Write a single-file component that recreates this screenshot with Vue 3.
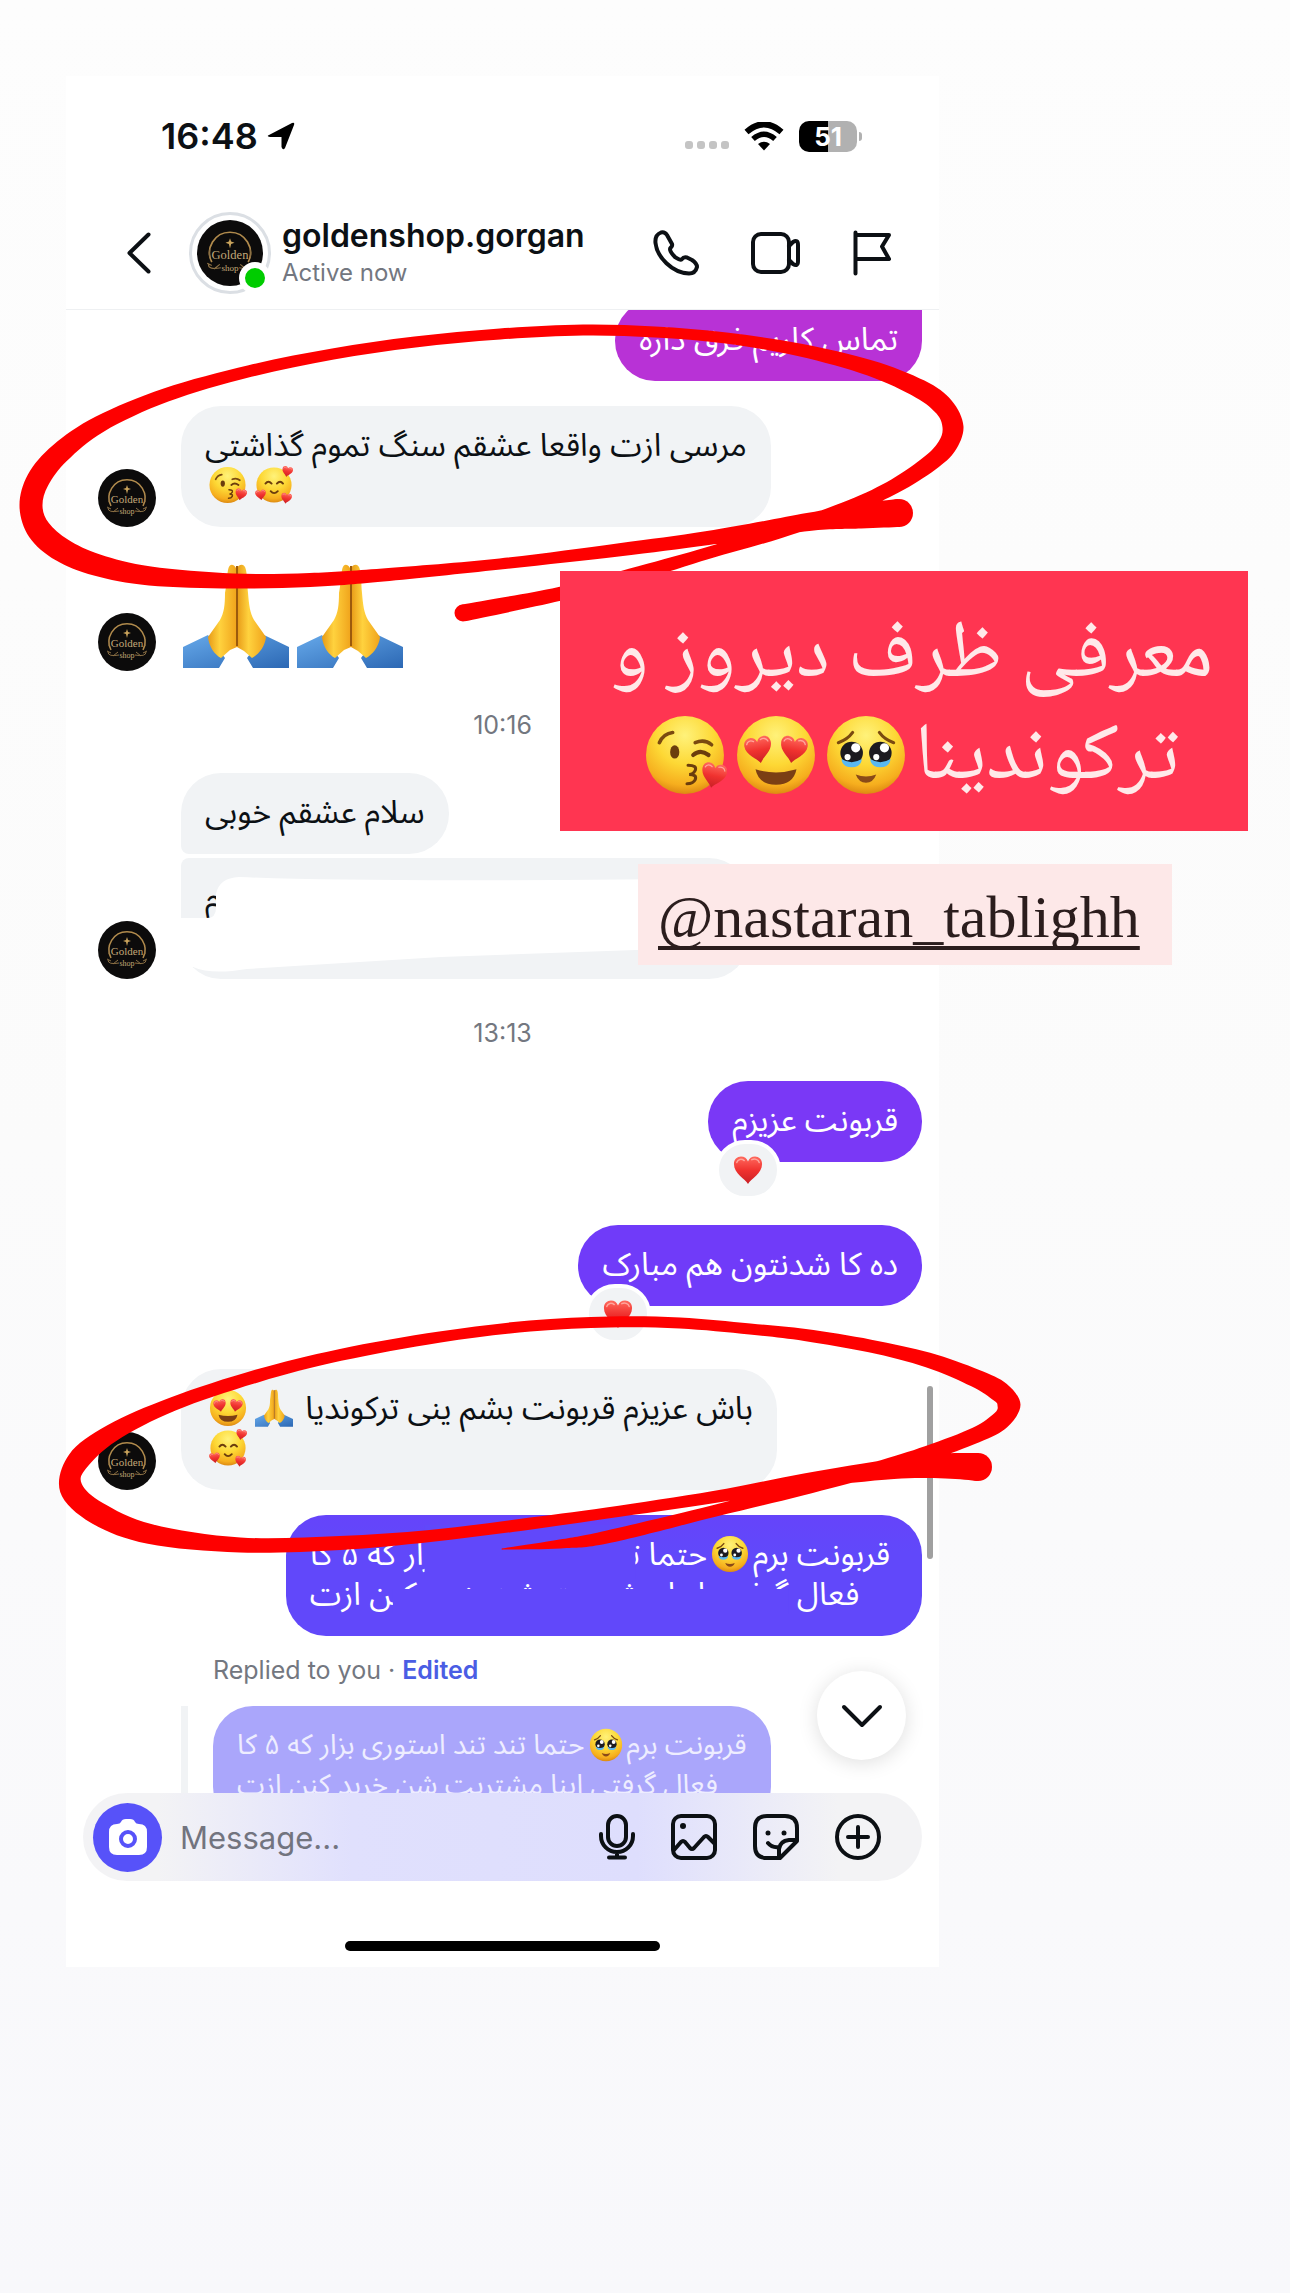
<script setup>
import { ref } from 'vue'

const draft = ref('')

const longReply = [
  ['قربونت برم', { icon: 'tears' }, 'حتما تند تند استوری بزار که ۵ کا'],
  ['فعال گرفتی اینا مشتریت شن خرید کنن ازت']
]

const messages = [
  { id: 1, kind: 'sent', tone: 'magenta', lines: [['تماس کاریم فرق داره']] },
  { id: 2, kind: 'received', avatar: true, lines: [['مرسی ازت واقعا عشقم سنگ تموم گذاشتی'], [{ icon: 'adore' }, { icon: 'kiss' }]] },
  { id: 3, kind: 'emoji', avatar: true },
  { id: 4, kind: 'time', text: '10:16' },
  { id: 5, kind: 'received', joined: 'first', lines: [['سلام عشقم خوبی']] },
  { id: 6, kind: 'received', joined: 'last', avatar: true, hidden: true, lines: [['م'], []] },
  { id: 7, kind: 'time', text: '13:13' },
  { id: 8, kind: 'sent', tone: 'violet', liked: true, lines: [['قربونت عزیزم']] },
  { id: 9, kind: 'sent', tone: 'purple', liked: true, lines: [['ده کا شدنتون هم مبارک']] },
  { id: 10, kind: 'received', avatar: true, lines: [['باش عزیزم قربونت بشم ینی ترکوندیا ', { icon: 'pray' }, { icon: 'love' }], [{ icon: 'adore' }]] },
  { id: 11, kind: 'sent', tone: 'indigo', scribbled: true, lines: longReply }
]

// marker strokes as [x, y, thickness]
const firstLoop = [
  [899, 513, 28], [860, 516, 25], [808, 522, 18], [708, 538, 14], [618, 550, 13], [500, 564, 11],
  [383, 575, 13], [310, 580, 14], [233, 581, 15], [150, 576, 19], [97, 565, 22], [62, 550, 24],
  [39, 530, 24], [31, 506, 23], [38, 480, 23], [60, 453, 21], [100, 424, 17], [166, 395, 14],
  [250, 371, 12], [333, 354, 11], [415, 342, 11], [500, 334, 11], [583, 330, 11], [655, 332, 11],
  [726, 338, 11], [800, 350, 13], [870, 368, 16], [920, 389, 19], [944, 407, 20], [953, 427, 21],
  [947, 446, 19], [930, 463, 17], [895, 486, 15], [850, 507, 14], [779, 532, 13], [708, 553, 12],
  [640, 573, 14], [559, 594, 14], [463, 613, 17]
]
const secondLoop = [
  [978, 1467, 28], [945, 1466, 25], [893, 1469, 20], [805, 1481, 15], [714, 1497, 12], [607, 1513, 11],
  [520, 1525, 12], [430, 1536, 12], [340, 1543, 14], [240, 1545, 15], [150, 1534, 20], [97, 1513, 23],
  [71, 1488, 23], [78, 1461, 22], [112, 1433, 18], [173, 1404, 14], [257, 1376, 13], [340, 1355, 12],
  [440, 1337, 11], [530, 1326, 11], [610, 1322, 11], [680, 1323, 11], [750, 1329, 11], [805, 1335, 12],
  [870, 1346, 13], [928, 1360, 15], [975, 1378, 18], [1000, 1392, 21], [1009, 1405, 23], [1001, 1420, 19],
  [976, 1435, 16], [928, 1453, 15], [875, 1469, 14], [800, 1489, 14], [714, 1511, 12], [607, 1537, 13],
  [560, 1544, 9], [502, 1549, 1]
]

function curve(points) {
  let d = ''
  for (let i = 0; i < points.length - 1; i++) {
    const a = points[i - 1] || points[i]
    const b = points[i]
    const c = points[i + 1]
    const e = points[i + 2] || c
    d += `C${b[0] + (c[0] - a[0]) / 6} ${b[1] + (c[1] - a[1]) / 6} `
    d += `${c[0] - (e[0] - b[0]) / 6} ${c[1] - (e[1] - b[1]) / 6} ${c[0]} ${c[1]}`
  }
  return d
}

function ribbon(points) {
  const left = []
  const right = []
  points.forEach(([x, y, w], i) => {
    const before = points[i - 1] || points[i]
    const after = points[i + 1] || points[i]
    const dx = after[0] - before[0]
    const dy = after[1] - before[1]
    const len = Math.hypot(dx, dy)
    const nx = (-dy / len) * (w / 2)
    const ny = (dx / len) * (w / 2)
    left.push([x + nx, y + ny])
    right.unshift([x - nx, y - ny])
  })
  return `M${left[0].join(' ')}${curve(left)}L${right[0].join(' ')}${curve(right)}Z`
}

const loops = [firstLoop, secondLoop].map((points) => ({
  d: ribbon(points),
  caps: [points[0], points[points.length - 1]]
}))
</script>

<template>
  <main class="story">
    <svg class="sprites" width="0" height="0" aria-hidden="true">
      <defs>
        <radialGradient id="face" cx="50%" cy="25%" r="75%">
          <stop offset="0" stop-color="#fff27a" />
          <stop offset=".5" stop-color="#fdd835" />
          <stop offset=".85" stop-color="#f6ae1e" />
          <stop offset="1" stop-color="#dd8a12" />
        </radialGradient>
        <linearGradient id="red" x1="0" y1="0" x2="0" y2="1">
          <stop offset="0" stop-color="#ff6a5e" />
          <stop offset=".5" stop-color="#f0322f" />
          <stop offset="1" stop-color="#c91f25" />
        </linearGradient>
        <linearGradient id="skin" x1="0" y1="0" x2="1" y2="0">
          <stop offset="0" stop-color="#e79a17" />
          <stop offset=".4" stop-color="#ffd23e" />
          <stop offset="1" stop-color="#f0a31b" />
        </linearGradient>
        <linearGradient id="sleeve" x1="0" y1="0" x2="1" y2="1">
          <stop offset="0" stop-color="#66a9ea" />
          <stop offset="1" stop-color="#2c68b4" />
        </linearGradient>
      </defs>
      <symbol id="heart" viewBox="0 0 32 32">
        <path d="M16 31C13 25 1 20 1 9.500C1 4.500 4.500 1.500 8.500 1.500C12 1.500 15 3.500 16 7C17 3.500 20 1.500 23.500 1.500C27.500 1.500 31 4.500 31 9.500C31 20 19 25 16 31Z" fill="url(#red)" />
        <path d="M4 8C5 4.500 9 3.500 12 6M20 5C23 3.500 27 4.500 28 8" fill="none" stroke="#ffa59c" stroke-width="1.500" stroke-linecap="round" />
      </symbol>
      <symbol id="kiss" viewBox="0 0 80 80">
        <circle cx="39" cy="40" r="38" fill="url(#face)" />
        <path d="M14 28Q18 19 27 18M49 28Q58 24 65 30" fill="none" stroke="#7a4a10" stroke-width="3.500" stroke-linecap="round" />
        <ellipse cx="29" cy="37" rx="4.500" ry="6.500" fill="#6b3d0d" />
        <path d="M47 40Q54 34 62 40" fill="none" stroke="#6b3d0d" stroke-width="4" stroke-linecap="round" />
        <path d="M42 50Q51 50 49 55Q47 59 43 59Q51 59 49 64Q47 68 41 68" fill="none" stroke="#6b3d0d" stroke-width="3" stroke-linecap="round" />
        <use href="#heart" x="54" y="47" width="26" height="26" transform="rotate(12 67 60)" />
      </symbol>
      <symbol id="love" viewBox="0 0 80 80">
        <circle cx="40" cy="40" r="38" fill="url(#face)" />
        <use href="#heart" x="9" y="21" width="28" height="28" transform="rotate(-10 23 35)" />
        <use href="#heart" x="43" y="21" width="28" height="28" transform="rotate(10 57 35)" />
        <path d="M20 54Q40 60 60 54Q57 69 40 69Q23 69 20 54Z" fill="#7b3f14" />
      </symbol>
      <symbol id="tears" viewBox="0 0 80 80">
        <circle cx="40" cy="40" r="38" fill="url(#face)" />
        <path d="M13 28Q22 25 27 18M53 18Q58 25 67 28" fill="none" stroke="#7a4a10" stroke-width="3" stroke-linecap="round" />
        <circle cx="26" cy="38" r="11" fill="#1c1a20" />
        <circle cx="54" cy="38" r="11" fill="#1c1a20" />
        <path d="M16 44Q26 50 36 44Q35 52 26 52Q17 52 16 44ZM44 44Q54 50 64 44Q63 52 54 52Q45 52 44 44Z" fill="#5ab8f0" />
        <g fill="#fff">
          <circle cx="30" cy="33" r="4.500" /><circle cx="58" cy="33" r="4.500" />
          <circle cx="22" cy="42" r="3" /><circle cx="50" cy="42" r="3" />
        </g>
        <path d="M30 59Q40 63 50 59Q47 67 40 67Q33 67 30 59Z" fill="#8a4a18" />
      </symbol>
      <symbol id="adore" viewBox="0 0 80 80">
        <circle cx="40" cy="40" r="37" fill="url(#face)" />
        <path d="M22 37Q28 29 35 37M46 37Q53 29 59 37" fill="none" stroke="#6b3d0d" stroke-width="4" stroke-linecap="round" />
        <path d="M33 53Q40 61 48 53" fill="none" stroke="#6b3d0d" stroke-width="4" stroke-linecap="round" />
        <use href="#heart" x="56" y="0" width="24" height="24" transform="rotate(12 68 12)" />
        <use href="#heart" x="0" y="49" width="24" height="24" transform="rotate(-8 11 60)" />
        <use href="#heart" x="54" y="56" width="24" height="24" transform="rotate(10 65 67)" />
      </symbol>
      <symbol id="pray" viewBox="0 0 106 106">
        <path d="M0 84L25 72L42 95L36 105H0ZM106 84L81 72L64 95L70 105H106Z" fill="url(#sleeve)" />
        <path d="M53 5C50 0 46 1 45 7C43 18 44 20 42 30C42 42 41 50 37 57L25 74C26 84 32 92 38 95L47 87L54 84Z" fill="url(#skin)" />
        <path d="M54 5C57 0 62 1 63 7C65 18 64 20 65 30C66 42 67 50 71 57L83 74C82 84 75 92 69 95L61 88L54 84Z" fill="url(#skin)" />
        <path d="M54 3V83" stroke="#9c5a0c" stroke-width="2" />
      </symbol>
      <symbol id="logo" viewBox="0 0 58 58">
        <circle cx="29" cy="29" r="29" fill="#0c0b0b" />
        <path d="M13 37A18 18 0 1 1 45 37" fill="none" stroke="#b08a4c" stroke-width="1.500" />
        <path d="M29 16L30 19L33 20L30 21L29 25L28 21L25 20L28 19Z" fill="#c9a35c" />
        <rect x="13" y="25" width="32" height="10" fill="#0c0b0b" />
        <path d="M11 26V33M47 26V33M10 39Q10 44 21 42M48 39Q48 44 37 42M9 38L13 40M49 38L45 40M15 43L20 39M43 43L38 39" fill="none" stroke="#8d7145" stroke-width="1" />
        <text x="29" y="34" text-anchor="middle" class="logo-name">Golden</text>
        <text x="29" y="45" text-anchor="middle" class="logo-kind">shop</text>
      </symbol>
    </svg>

    <section class="phone">
      <div class="status">
        <span class="clock">16:48</span>
        <svg class="arrow" width="28" height="28" viewBox="0 0 28 28"><path d="M2 13L25 1Q28 0 27 3L18 26Q16 29 14.500 25V15H3Q-1 14.500 2 13Z" /></svg>
        <span class="signal"><i></i><i></i><i></i><i></i></span>
        <svg width="40" height="29" viewBox="0 0 40 29">
          <path d="M2.500 10Q20 -5.500 37.500 10" fill="none" stroke="#000" stroke-width="6" />
          <path d="M9 17Q20 7.500 31 17" fill="none" stroke="#000" stroke-width="5.500" />
          <path d="M14 22Q20 17.500 26 22L20 28.500Z" />
        </svg>
        <span class="battery">51</span>
      </div>

      <header class="header">
        <button class="bare back" aria-label="Back">
          <svg width="24" height="42" viewBox="0 0 24 42"><path d="M21.500 2.500L2.500 21L21.500 39.500" /></svg>
        </button>
        <div class="profile-pic">
          <svg width="66" height="66"><use href="#logo" /></svg>
          <span class="online"></span>
        </div>
        <div class="who">
          <h1>goldenshop.gorgan</h1>
          <p>Active now</p>
        </div>
        <button class="bare" aria-label="Call">
          <svg width="46" height="46" viewBox="0 0 46 46"><path d="M8 2.500C4 4 2 8 2.500 13C4 27 19 43 36 43.500C40 43.500 43 41 44 37C44 34 42 32 39 30L34 27.500C32 27 30 27.500 29 29C27 31 25 29 22 27C19 24 17 22 17 19C17 17 20 17 19 14L14 5C12 2 10 2 8 2.500Z" /></svg>
        </button>
        <button class="bare" aria-label="Video call">
          <svg width="50" height="42" viewBox="0 0 50 42"><rect x="2" y="2" width="36" height="38" rx="8" /><path d="M38 14L42 10Q47 7 47 13V29Q47 35 42 32L38 28" /></svg>
        </button>
        <button class="bare" aria-label="Flag">
          <svg width="38" height="46" viewBox="0 0 38 46"><path d="M2.500 2.500V43.500M2.500 5H36L29 16.500L36 29H2.500" /></svg>
        </button>
      </header>

      <div class="chat">
        <template v-for="message in messages" :key="message.id">
          <p v-if="message.kind === 'time'" class="time">{{ message.text }}</p>
          <div
            v-else
            :class="['row', message.kind, message.joined, { liked: message.liked }]"
          >
            <svg v-if="message.avatar" class="avatar" width="58" height="58"><use href="#logo" /></svg>
            <div v-if="message.kind === 'emoji'" class="hands">
              <svg width="106" height="106"><use href="#pray" /></svg>
              <svg width="106" height="106"><use href="#pray" /></svg>
            </div>
            <div v-else :class="['bubble', message.tone, { wide: message.hidden }]" dir="rtl">
              <div v-for="(line, l) in message.lines" :key="l" class="line">
                <template v-for="(part, p) in line" :key="p">
                  <svg v-if="part.icon" class="emoji"><use :href="'#' + part.icon" /></svg>
                  <template v-else>{{ part }}</template>
                </template>
              </div>
              <svg v-if="message.hidden" class="cover" viewBox="0 0 568 121" preserveAspectRatio="none">
                <path d="M-2 60H26Q35 60 35 50V36Q38 20 58 19Q200 25 568 20V88L260 99L66 111Q30 117 12 109L-2 121Z" fill="#fff" />
              </svg>
              <svg v-if="message.scribbled" class="cover" viewBox="0 0 643 121" preserveAspectRatio="none">
                <path d="M140 10H353V64H140ZM108 74H508V99H108Z" fill="#6148fa" />
              </svg>
              <span v-if="message.liked" class="reaction"><svg width="30" height="30"><use href="#heart" /></svg></span>
            </div>
          </div>
        </template>

        <p class="reply-note">Replied to you · <button class="edited">Edited</button></p>
        <div class="quote">
          <div class="bubble" dir="rtl">
            <div v-for="(line, l) in longReply" :key="l" class="line">
              <template v-for="(part, p) in line" :key="p">
                <svg v-if="part.icon" class="emoji"><use :href="'#' + part.icon" /></svg>
                <template v-else>{{ part }}</template>
              </template>
            </div>
          </div>
        </div>
        <span class="scrollbar"></span>
        <button class="to-bottom" aria-label="Scroll to latest">
          <svg width="42" height="24" viewBox="0 0 42 24"><path d="M3 3L21 21L39 3" /></svg>
        </button>
      </div>

      <form class="composer" @submit.prevent>
        <button class="camera" type="button" aria-label="Camera">
          <svg width="38" height="36" viewBox="0 0 38 36">
            <path d="M8 5Q11 5 12 3Q13 0 17 0H21Q25 0 26 3Q27 5 30 5Q38 5 38 13V28Q38 36 30 36H8Q0 36 0 28V13Q0 5 8 5Z" fill="#fff" />
            <circle cx="19" cy="20" r="7" fill="#fff" stroke="#5752f9" stroke-width="4" />
          </svg>
        </button>
        <input v-model="draft" type="text" placeholder="Message..." aria-label="Message">
        <button class="bare" type="button" aria-label="Voice message">
          <svg width="36" height="46" viewBox="0 0 36 46"><rect x="9" y="2" width="18" height="30" rx="9" /><path d="M2 20V22C2 31 9 38 18 38C27 38 34 31 34 22V20M18 38V43M10 43.500H26" /></svg>
        </button>
        <button class="bare" type="button" aria-label="Photo">
          <svg width="46" height="46" viewBox="0 0 46 46"><rect x="2" y="2" width="42" height="42" rx="8" /><circle cx="12" cy="12" r="3" class="dot" /><path d="M3 36L10 28Q12 26 14 28L19 34Q21 36 23 34L33 23Q35 21 37 23L44 30" /></svg>
        </button>
        <button class="bare" type="button" aria-label="Sticker">
          <svg width="46" height="46" viewBox="0 0 46 46"><path d="M14 2H32Q44 2 44 14V27L27 44H14Q2 44 2 32V14Q2 2 14 2ZM44 26H36Q27 27 26 35V44M15 29Q19 34 26 33" /><circle cx="15" cy="19" r="2.500" class="dot" /><circle cx="31" cy="19" r="2.500" class="dot" /></svg>
        </button>
        <button class="bare" type="button" aria-label="More">
          <svg width="46" height="46" viewBox="0 0 46 46"><circle cx="23" cy="23" r="21" /><path d="M23 13V33M13 23H33" /></svg>
        </button>
      </form>
      <div class="home-bar"></div>
    </section>

    <svg class="marker" width="1290" height="1600" viewBox="0 0 1290 1600" aria-hidden="true">
      <g v-for="(loop, i) in loops" :key="i">
        <path :d="loop.d" />
        <circle v-for="(cap, c) in loop.caps" :key="c" :cx="cap[0]" :cy="cap[1]" :r="cap[2] / 2" />
      </g>
    </svg>

    <div class="caption" dir="rtl">
      <div>معرفی ظرف دیروز و</div>
      <div>
        ترکوندینا<svg><use href="#tears" /></svg><svg><use href="#love" /></svg><svg><use href="#kiss" /></svg>
      </div>
    </div>
    <div class="mention"><a href="#nastaran">@nastaran_tablighh</a></div>
  </main>
</template>

<style>
body {
  margin: 0;
  background: #f9f9fb;
}
</style>

<style scoped>
.story {
  position: relative;
  box-sizing: border-box;
  min-height: 100vh;
  padding: 76px 27.2% 0 66px;
  overflow: hidden;
  background: linear-gradient(#fdfdfd, #fbfbfb 50%, #f8f8fb);
  font-family: Inter, "DejaVu Sans", sans-serif;
  color: #0c1014;
}

.sprites {
  position: absolute;
}

.logo-name,
.logo-kind {
  font-family: "Liberation Serif", serif;
  fill: #c2a878;
}

.logo-name {
  font-size: 11px;
}

.logo-kind {
  font-size: 8px;
}

.phone {
  background: #fff;
  padding-bottom: 16px;
}

/* Status bar */
.status {
  display: flex;
  align-items: center;
  height: 40px;
  padding: 40px 77px 0 95px;
}

.clock {
  font-size: 36px;
  font-weight: 600;
}

.arrow {
  margin-left: 9px;
}

.signal {
  display: flex;
  gap: 4px;
  margin: 18px 15px 0 auto;
}

.signal i {
  width: 8px;
  height: 8px;
  border-radius: 3px;
  background: #c4c4c4;
}

.battery {
  position: relative;
  width: 58px;
  margin: 0 5px 0 15px;
  border-radius: 10px;
  background: linear-gradient(90deg, #000 50%, #b1b1b1 50%);
  color: #fff;
  font-size: 26px;
  font-weight: 700;
  line-height: 31px;
  text-align: center;
}

.battery::after {
  content: "";
  position: absolute;
  right: -5px;
  top: 11px;
  width: 3px;
  height: 9px;
  border-radius: 0 3px 3px 0;
  background: #b1b1b1;
}

/* Chat header */
.header {
  display: flex;
  align-items: center;
  gap: 52px;
  padding: 56px 48px 15px 61px;
  border-bottom: 1px solid #eef0f2;
}

.bare {
  display: flex;
  padding: 0;
  border: 0;
  background: none;
}

.bare svg,
.to-bottom svg {
  fill: none;
  stroke: #0c1014;
  stroke-width: 4;
  stroke-linecap: round;
  stroke-linejoin: round;
}

.bare .dot {
  fill: #0c1014;
  stroke: none;
}

.profile-pic {
  position: relative;
  display: flex;
  margin-left: -14px;
  padding: 5px;
  border: 3px solid #dbdfe4;
  border-radius: 50%;
}

.online {
  position: absolute;
  right: -3px;
  bottom: -3px;
  width: 20px;
  height: 20px;
  border: 6px solid #fff;
  border-radius: 50%;
  background: #0c0;
}

.who {
  flex: 1;
  margin-left: -41px;
}

.who h1 {
  margin: 0;
  font-size: 32px;
  font-weight: 600;
  line-height: 40px;
}

.who p {
  margin: 0;
  color: #737780;
  font-size: 24px;
  line-height: 34px;
}

/* Messages */
.chat {
  position: relative;
  overflow: hidden;
  padding: 0 17px 0 115px;
}

.row {
  display: flex;
  align-items: flex-end;
  margin-bottom: 25px;
}

.row:first-child {
  margin-top: -10px;
}

.sent {
  justify-content: flex-end;
}

.liked {
  margin-bottom: 63px;
}

.emoji,
.last {
  margin-bottom: 0;
}

.first {
  margin-bottom: 4px;
}

.avatar {
  flex: none;
  margin: 0 25px 0 -83px;
}

.bubble {
  position: relative;
  padding: 20px 24px 21px;
  border-radius: 40px;
  background: #f1f3f5;
  font-family: "Noto Sans Arabic", "DejaVu Sans", sans-serif;
  font-size: 32px;
  line-height: 40px;
  text-align: left;
}

.line {
  height: 40px;
  white-space: nowrap;
}

.first .bubble {
  border-bottom-left-radius: 8px;
}

.last .bubble {
  border-top-left-radius: 8px;
}

.wide {
  width: 520px;
}

.sent .bubble {
  color: #fff;
}

.sent .magenta {
  border-top-right-radius: 8px;
  background: #b832d6;
}

.violet {
  background: #7a38f6;
}

.purple {
  background: #703bf9;
}

.indigo {
  padding-right: 32px;
  background: linear-gradient(#6544fa, #6148fa 30%);
}

svg.emoji {
  width: 38px;
  height: 38px;
  margin: 0 4px;
  vertical-align: -8px;
}

.hands {
  display: flex;
  gap: 8px;
  padding: 11px 0 2px 2px;
}

.cover {
  position: absolute;
  inset: 0;
  width: 100%;
  height: 100%;
}

.reaction {
  position: absolute;
  left: 7px;
  bottom: -38px;
  display: flex;
  padding: 11px 14px;
  border: 4px solid #fff;
  border-radius: 30px;
  background: #f1f3f5;
}

.time {
  margin: 0 -17px 0 -115px;
  padding: 40px 0 34px;
  color: #737780;
  font-size: 25px;
  line-height: 28px;
  text-align: center;
}

.reply-note {
  margin: -25px 0 0 32px;
  padding: 20px 0 22px;
  color: #737780;
  font-size: 25px;
  line-height: 28px;
}

.edited {
  padding: 0;
  border: 0;
  background: none;
  color: #4a5de4;
  font: inherit;
  font-weight: 600;
}

.quote {
  display: flex;
  border-left: 7px solid #f1f3f5;
  padding-left: 25px;
}

.quote .bubble {
  background: #aaa6fb;
  color: #eeedff;
  font-size: 28px;
}

.quote svg.emoji {
  width: 34px;
  height: 34px;
}

.scrollbar {
  position: absolute;
  right: 6px;
  bottom: 268px;
  width: 6px;
  height: 173px;
  border-radius: 3px;
  background: #a0a0a0;
}

.to-bottom {
  position: absolute;
  right: 33px;
  bottom: 67px;
  display: flex;
  align-items: center;
  justify-content: center;
  width: 89px;
  height: 89px;
  border: 0;
  border-radius: 50%;
  background: #fff;
  box-shadow: 0 3px 20px rgba(0, 0, 0, 0.13);
}

/* Composer */
.composer {
  position: relative;
  display: flex;
  align-items: center;
  gap: 36px;
  height: 88px;
  margin: -34px 17px 0;
  padding: 0 41px 0 10px;
  box-sizing: border-box;
  border-radius: 44px;
  background: linear-gradient(90deg, #f3f3f5 9%, #e0e0fd 32%, #dedefd 66%, #f3f3f5 90%);
}

.camera {
  display: flex;
  flex: none;
  align-items: center;
  justify-content: center;
  width: 69px;
  height: 69px;
  padding: 0;
  border: 0;
  border-radius: 50%;
  background: #5752f9;
}

.composer input {
  flex: 1;
  min-width: 0;
  margin-left: -18px;
  padding: 0;
  border: 0;
  outline: 0;
  background: none;
  font: 31px Inter, sans-serif;
}

.composer input::placeholder {
  color: #72747f;
}

.home-bar {
  width: 36%;
  height: 10px;
  margin: 60px auto 0;
  border-radius: 5px;
  background: #000;
}

/* Story overlays */
.marker {
  position: absolute;
  left: 0;
  top: 0;
  fill: #fe0000;
}

.caption {
  position: absolute;
  left: 560px;
  top: 571px;
  box-sizing: border-box;
  width: 688px;
  padding: 36px 0 20px 16px;
  background: #ff3551;
  color: #ffe9e9;
  font-family: "Noto Naskh Arabic", "DejaVu Sans", serif;
  font-size: 81px;
  line-height: 102px;
  text-align: center;
  white-space: nowrap;
}

.caption div {
  height: 102px;
}

.caption svg {
  width: 82px;
  height: 82px;
  margin-right: 8px;
  vertical-align: -18px;
}

.mention {
  position: absolute;
  left: 638px;
  top: 864px;
  padding: 18px 32px 13px 20px;
  background: #fde8e8;
  font-family: "Liberation Serif", serif;
  font-size: 60px;
  line-height: 70px;
}

.mention a {
  color: #2b1d1d;
  text-decoration-thickness: 4px;
  text-underline-offset: 9px;
  text-decoration-skip-ink: none;
}
</style>
